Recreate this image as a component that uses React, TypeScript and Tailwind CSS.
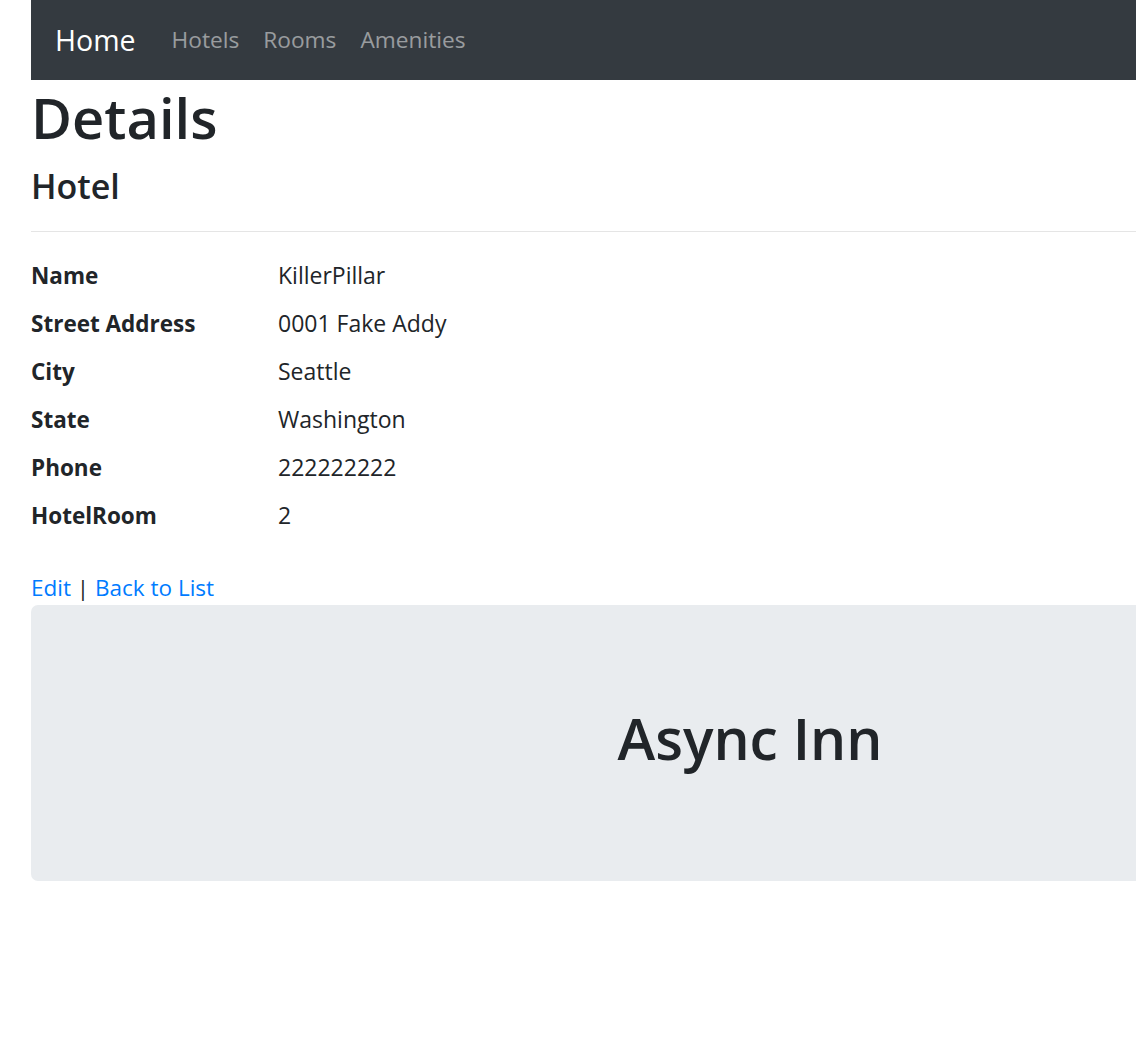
const rows = [
  { label: "Name", value: "KillerPillar" },
  { label: "Street Address", value: "0001 Fake Addy" },
  { label: "City", value: "Seattle" },
  { label: "State", value: "Washington" },
  { label: "Phone", value: "222222222" },
  { label: "HotelRoom", value: "2" },
];

const navLinks = ["Hotels", "Rooms", "Amenities"];

export default function App() {
  return (
    <div
      className="w-[1136px] min-h-[1058px] overflow-hidden bg-white text-[#212529]"
      style={{ fontFamily: '"Open Sans", "Noto Sans", sans-serif' }}
    >
      <div className="ml-[31px] w-[1438px]">
        {/* Navbar */}
        <nav className="flex h-[80px] items-center bg-[#343a40] px-[24px]">
          <a href="#" className="mr-[24px] text-[28.5px] leading-[45px] text-white">
            Home
          </a>
          <div className="flex items-center">
            {navLinks.map((link) => (
              <a
                key={link}
                href="#"
                className="px-[12px] text-[22.7px] leading-[36px] text-white/50"
              >
                {link}
              </a>
            ))}
          </div>
        </nav>

        <main>
          <h1 className="mb-[12px] pt-[2px] text-[56px] font-semibold leading-[70px]">Details</h1>

          <div>
            <h4 className="pt-[2px] text-[34px] font-semibold leading-[41px]">Hotel</h4>
            <hr className="my-[24px] border-0 border-t border-black/10" />
            <dl className="mb-[24px] text-[23px] leading-[33px]">
              {rows.map((row) => (
                <div key={row.label} className="flex">
                  <dt className="mb-[12px] w-[247px] pt-[3px] text-[22.5px] font-bold">{row.label}</dt>
                  <dd className="mb-[12px] pt-[3px]">{row.value}</dd>
                </div>
              ))}
            </dl>
          </div>

          <div className="pt-[3px] text-[22.5px] leading-[33px]">
            <a href="#" className="text-[#007bff]">Edit</a> |{" "}
            <a href="#" className="text-[#007bff]">Back to List</a>
          </div>

          {/* Jumbotron */}
          <div className="mt-px rounded-[7px] bg-[#e9ecef] px-[48px] pb-[96px] pt-[98px] text-center">
            <h1 className="mb-[12px] text-[57px] font-semibold leading-[70px]">Async Inn</h1>
          </div>
        </main>
      </div>
    </div>
  );
}
